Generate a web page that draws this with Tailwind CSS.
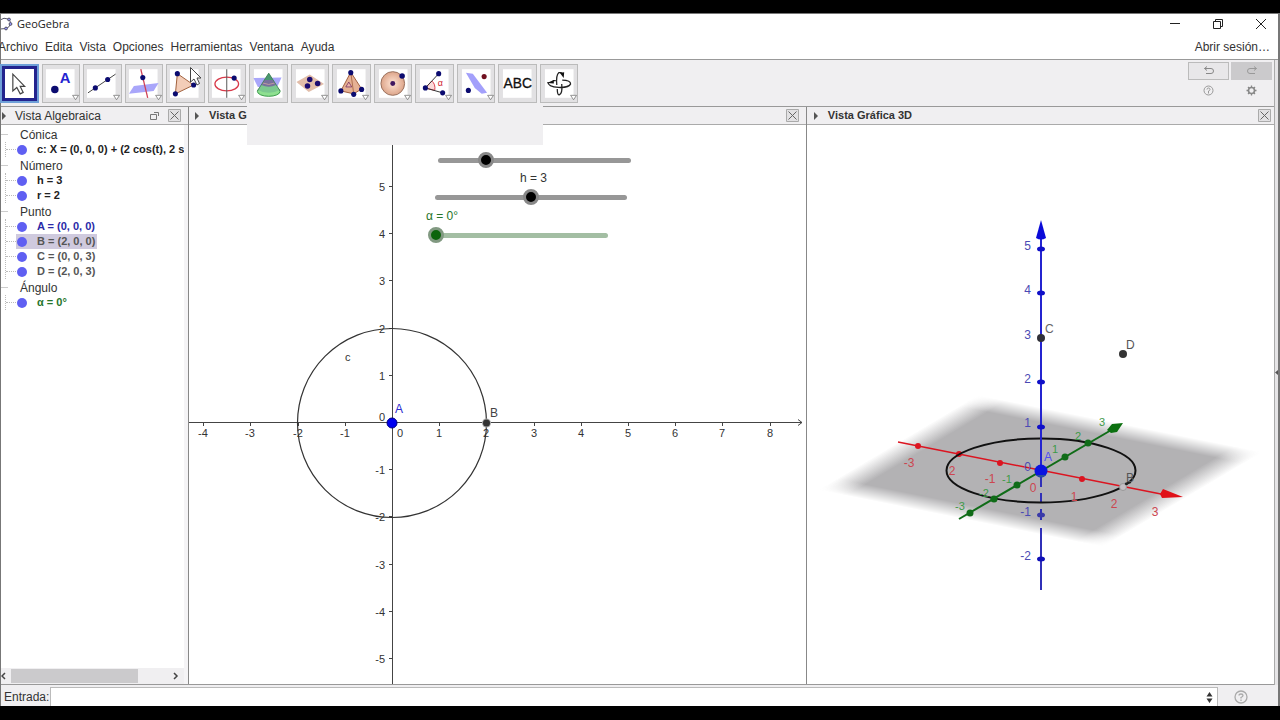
<!DOCTYPE html>
<html lang="es">
<head>
    <meta charset="UTF-8">
    <meta name="viewport" content="width=device-width, initial-scale=1.0">
    <title>GeoGebra</title>
    <script src="https://cdn.jsdelivr.net/npm/@tailwindcss/browser@4"></script>
</head>
<body class="bg-black font-['Liberation_Sans',Arial,sans-serif] text-xs text-[#333]">

<div class="flex flex-col h-screen pt-[13px] pb-[14px] overflow-hidden">
    <div class="flex flex-col flex-1 min-h-0 bg-white border-l border-t border-[#777] border-r-2">

        <!-- Title bar -->
        <header class="flex items-center h-5 shrink-0">
            <svg class="w-3 h-4 shrink-0" viewBox="0 0 12 16" fill="none" stroke="#555566" stroke-width="1">
                <path d="M-1 4Q3 1 7 3Q10 5 9.500 8Q8 12 5 12.500L-1 13"/>
                <g fill="#9a9aff"><circle cx="8" cy="3.500" r="1.400"/><circle cx="9.500" cy="8" r="1.400"/><circle cx="5" cy="12.500" r="1.400"/></g>
            </svg>
            <h1 class="flex-1 pl-1 font-['Open_Sans',sans-serif] text-[11px] text-[#222]">GeoGebra</h1>
            <div class="flex gap-[31px] pr-[11px]">
                <button aria-label="Minimizar"><svg class="w-3 h-3" viewBox="0 0 12 12" stroke="#222"><path d="M1 5.500H11"/></svg></button>
                <button aria-label="Restaurar"><svg class="w-3 h-3" viewBox="0 0 12 12" fill="none" stroke="#222"><path d="M1.500 3.500H8.500V10.500H1.500ZM3.500 3.500V1.500H10.500V8.500H8.500"/></svg></button>
                <button aria-label="Cerrar"><svg class="w-3 h-3" viewBox="0 0 12 12" stroke="#222"><path d="M1 1L11 11M11 1L1 11"/></svg></button>
            </div>
        </header>

        <!-- Menu bar -->
        <nav class="flex items-center gap-[7px] h-[25px] shrink-0 -ml-[3px] pr-2">
            <button>Archivo</button>
            <button>Edita</button>
            <button>Vista</button>
            <button>Opciones</button>
            <button>Herramientas</button>
            <button>Ventana</button>
            <button>Ayuda</button>
            <button class="ml-auto">Abrir sesión…</button>
        </nav>

        <div class="flex flex-1 min-h-0 border-t border-[#999]">
            <div class="flex flex-col flex-1 min-w-0">

                <!-- Toolbar -->
                <div class="relative flex items-center justify-between h-[46px] shrink-0 bg-[#f0eff1]">
                    <div id="tools" class="grid grid-cols-14 gap-[3px] w-[578px] -ml-px">
                        <button aria-label="Elige y mueve" class="h-[39px] bg-white border-2 border-[#6fa0d8] outline-3 -outline-offset-5 outline-[#23238e]">
                            <svg class="w-full h-full" viewBox="2 2 35 35"><path d="M13 10V27L17 23.500L20.500 30L23.500 28.500L20.500 22.500H25Z" fill="#fff" stroke="#444" stroke-width="1.200"/></svg>
                        </button>
                        <button aria-label="Punto" class="h-[39px] bg-[#e2e1e3] border border-[#bbb]">
                            <svg class="w-full h-full" viewBox="1 1 37 37"><path fill="#fff" d="M4 5H33V34H4Z"/><circle cx="13" cy="25.500" r="3.800" fill="#0b0b70"/><text x="18" y="19" font-size="15" font-weight="bold" fill="#2424d0">A</text><path d="M31 31.500H37L34 36Z" fill="#fff" stroke="#777" stroke-width=".8"/></svg>
                        </button>
                        <button aria-label="Recta" class="h-[39px] bg-[#e2e1e3] border border-[#bbb]">
                            <svg class="w-full h-full" viewBox="1 1 37 37"><path fill="#fff" d="M4 5H33V34H4Z"/><path d="M5 29L33 10" stroke="#444"/><g fill="#0b0b70"><circle cx="12.500" cy="24" r="2.600"/><circle cx="25" cy="15.500" r="2.600"/></g><path d="M31 31.500H37L34 36Z" fill="#fff" stroke="#777" stroke-width=".8"/></svg>
                        </button>
                        <button aria-label="Perpendicular" class="h-[39px] bg-[#e2e1e3] border border-[#bbb]">
                            <svg class="w-full h-full" viewBox="1 1 37 37"><path fill="#fff" d="M4 5H33V34H4Z"/><path d="M9 22L34 19L29 27L4 30Z" fill="#a9a6fa"/><path d="M16 5L23 34" stroke="#d04055" stroke-width="1.300"/><circle cx="18" cy="13.500" r="2.600" fill="#0b0b70"/><path d="M31 31.500H37L34 36Z" fill="#fff" stroke="#777" stroke-width=".8"/></svg>
                        </button>
                        <button aria-label="Polígono" class="h-[39px] bg-[#e2e1e3] border border-[#bbb]">
                            <svg class="w-full h-full" viewBox="1 1 37 37"><path fill="#fff" d="M4 5H33V34H4Z"/><path d="M11.500 9.500L28 21L9.500 30Z" fill="#f3cdb8" stroke="#a0603c"/><g fill="#0b0b70"><circle cx="11.500" cy="9.500" r="2.600"/><circle cx="28" cy="21" r="2.600"/><circle cx="9.500" cy="30" r="2.600"/></g></svg>
                        </button>
                        <button aria-label="Circunferencia" class="h-[39px] bg-[#e2e1e3] border border-[#bbb]">
                            <svg class="w-full h-full" viewBox="1 1 37 37"><path fill="#fff" d="M4 5H33V34H4Z"/><ellipse cx="19" cy="20" rx="12" ry="7" fill="none" stroke="#d83a4a" stroke-width="1.300"/><path d="M19 5V34" stroke="#555"/><circle cx="26.500" cy="14" r="2.600" fill="#0b0b70"/><path d="M31 31.500H37L34 36Z" fill="#fff" stroke="#777" stroke-width=".8"/></svg>
                        </button>
                        <button aria-label="Intersección" class="h-[39px] bg-[#e2e1e3] border border-[#bbb]">
                            <svg class="w-full h-full" viewBox="1 1 37 37"><path fill="#fff" d="M5 5H34V34H5Z"/><path d="M4.500 14L33 13.500L29 22L9 23Z" fill="#a9a6fa"/><ellipse cx="20" cy="27.500" rx="11.500" ry="5" fill="#8ee090" stroke="#3a9a4a"/><path d="M20 9L9 26Q20 32 31 26Z" fill="#7cc890"/><path d="M20 9L15.500 16H24.500Z" fill="#4a9870"/><path d="M15.500 16H24.500L27.500 21Q20 24.500 12.500 21Z" fill="#78709c"/><path d="M14 19Q20 22 26 19" fill="none" stroke="#c09aa0"/><path d="M8.500 27L20 9L31.500 27" fill="none" stroke="#3a7a50" stroke-width=".8"/></svg>
                        </button>
                        <button aria-label="Plano" class="h-[39px] bg-[#e2e1e3] border border-[#bbb]">
                            <svg class="w-full h-full" viewBox="1 1 37 37"><path fill="#fff" d="M5 5H34V34H5Z"/><path d="M5.500 18L19 10.500L33.500 20L18 28Z" fill="#e2bda9"/><g fill="#1b0b70"><circle cx="19" cy="15.500" r="2.800"/><circle cx="16.700" cy="22" r="2.800"/><circle cx="27" cy="19.500" r="2.800"/></g><path d="M31 31.500H37L34 36Z" fill="#fff" stroke="#777" stroke-width=".8"/></svg>
                        </button>
                        <button aria-label="Pirámide" class="h-[39px] bg-[#e2e1e3] border border-[#bbb]">
                            <svg class="w-full h-full" viewBox="1 1 37 37"><path fill="#fff" d="M5 5H34V34H5Z"/><path d="M19 8L30 25L22 30L9 27Z" fill="#e6b194" stroke="#a05c3c"/><path d="M19 8L22 30" fill="none" stroke="#a05c3c" stroke-width=".8"/><path d="M17 18L20 23H14Z" fill="#edb5aa" stroke="#763060" stroke-width=".8"/><g fill="#0b0b70"><circle cx="19" cy="8.500" r="2.600"/><circle cx="9" cy="27" r="2.600"/><circle cx="22" cy="30.500" r="2.600"/><circle cx="30" cy="25.500" r="2.600"/></g><path d="M31 31.500H37L34 36Z" fill="#fff" stroke="#777" stroke-width=".8"/></svg>
                        </button>
                        <button aria-label="Esfera" class="h-[39px] bg-[#e2e1e3] border border-[#bbb]">
                            <svg class="w-full h-full" viewBox="1 1 37 37"><defs><radialGradient id="ball"><stop offset=".2" stop-color="#f8d8c6"/><stop offset="1" stop-color="#dda58a"/></radialGradient></defs><path fill="#fff" d="M5 5H34V34H5Z"/><circle cx="19" cy="19.500" r="12" fill="url(#ball)" stroke="#98705c"/><circle cx="19" cy="19.500" r="2.500" fill="#401860"/><circle cx="28.500" cy="12" r="2.800" fill="#0b0b70"/><path d="M31 31.500H37L34 36Z" fill="#fff" stroke="#777" stroke-width=".8"/></svg>
                        </button>
                        <button aria-label="Ángulo" class="h-[39px] bg-[#e2e1e3] border border-[#bbb]">
                            <svg class="w-full h-full" viewBox="1 1 37 37"><path fill="#fff" d="M5 5H34V34H5Z"/><path d="M10.500 24L17 17Q21 20 20 26.500Z" fill="#fbdada" stroke="#e04050"/><path d="M24 9.500L10.500 24L28 29" fill="none" stroke="#333"/><g fill="#0b0b70"><circle cx="24" cy="9.500" r="2.600"/><circle cx="10.500" cy="24" r="2.600"/><circle cx="28" cy="29" r="2.600"/></g><text x="23" y="22" font-size="9" fill="#d02030">α</text><path d="M31 31.500H37L34 36Z" fill="#fff" stroke="#777" stroke-width=".8"/></svg>
                        </button>
                        <button aria-label="Simetría" class="h-[39px] bg-[#e2e1e3] border border-[#bbb]">
                            <svg class="w-full h-full" viewBox="1 1 37 37"><path fill="#fff" d="M5 5H34V34H5Z"/><path d="M9 8.500L16 9.500L30.500 29L25 30L18 24Z" fill="#a3a0fb"/><circle cx="27.500" cy="12.500" r="2.600" fill="#701020"/><circle cx="11.500" cy="26.500" r="2.600" fill="#0b0b70"/><path d="M31 31.500H37L34 36Z" fill="#fff" stroke="#777" stroke-width=".8"/></svg>
                        </button>
                        <button aria-label="Texto" class="h-[39px] bg-[#e2e1e3] border border-[#bbb]">
                            <svg class="w-full h-full" viewBox="1 1 37 37"><path fill="#fff" d="M5 5H34V34H5Z"/><text x="20" y="24" font-size="14" text-anchor="middle" fill="#111" stroke="#111" stroke-width=".3">ABC</text></svg>
                        </button>
                        <button aria-label="Rota vista" class="h-[39px] bg-[#e2e1e3] border border-[#bbb]">
                            <svg class="w-full h-full" viewBox="1 1 37 37"><path fill="#fff" d="M5 5H34V34H5Z"/><g fill="none" stroke="#222" stroke-width="1.300"><path d="M8 18C8 25 29 25 31 20C31 17 26 16 22.500 16M13 16.500H16"/><path d="M17.500 25C17.500 29 18 31 19.500 31C22.500 30 22.500 25 22 20M17 21C16.500 15 17 10 19 8.500H22"/></g><path d="M7 19L14 16V19.500ZM20 8.500L24.500 8L24 14Z" fill="#111"/><path d="M31 31.500H37L34 36Z" fill="#fff" stroke="#777" stroke-width=".8"/></svg>
                        </button>
                    </div>

                    <div class="grid grid-cols-2 gap-x-[2px] gap-y-px w-[84px] mr-[2px] mb-[5px]">
                        <button aria-label="Deshace" class="flex items-center justify-center h-[18px] bg-[#e8e7e9] border border-[#bbb]">
                            <svg class="w-3 h-3" viewBox="0 0 12 12" fill="none" stroke="#888"><path d="M4 1.500L1.500 3.500L4 5.500M1.500 3.500H8Q10.500 3.500 10.500 6T8 8.500H3"/></svg>
                        </button>
                        <button aria-label="Rehace" class="flex items-center justify-center h-[18px] bg-[#cbcacc]">
                            <svg class="w-3 h-3" viewBox="0 0 12 12" fill="none" stroke="#999"><path d="M8 1.500L10.500 3.500L8 5.500M10.500 3.500H4Q1.500 3.500 1.500 6T4 8.500H9"/></svg>
                        </button>
                        <button aria-label="Ayuda" class="flex items-center justify-center h-[18px]">
                            <svg class="w-[11px] h-[11px]" viewBox="0 0 11 11" fill="none" stroke="#999"><circle cx="5.500" cy="5.500" r="4.500"/><path d="M4 4.500Q4 3 5.500 3T7 4.500Q7 5.500 5.500 6V8.500"/></svg>
                        </button>
                        <button aria-label="Preferencias" class="flex items-center justify-center h-[18px]">
                            <svg class="w-[11px] h-[11px]" viewBox="0 0 11 11" fill="none" stroke="#888"><circle cx="5.500" cy="5.500" r="3" stroke-width="1.600"/><path d="M5.500 .5V2.500M5.500 8.500V10.500M.5 5.500H2.500M8.500 5.500H10.500M2 2L3.500 3.500M7.500 7.500L9 9M9 2L7.500 3.500M3.500 7.500L2 9" stroke-width="1.300"/></svg>
                        </button>
                    </div>

                    <!-- Empty tooltip under the toolbar -->
                    <div class="absolute z-20 left-[246px] top-[44px] w-[296px] h-[41px] bg-[#f0eff1]"></div>
                    <!-- Mouse pointer -->
                    <svg class="absolute z-20 left-[188px] top-[6px] w-4 h-6" viewBox="0 0 16 24"><path d="M1.500 1.500V16L5 13L8 19L10.500 17.500L8 12H12Z" fill="#fff" stroke="#444"/></svg>
                </div>

                <!-- Views -->
                <main class="flex flex-1 min-h-0 border-y border-[#999]">

                    <!-- Algebra view -->
                    <section class="flex flex-col w-[188px] shrink-0 border-r border-[#888] bg-[#f5f4f6]">
                        <div class="flex items-center h-[18px] shrink-0 pr-[7px] bg-[#f0eff1] border-b border-[#aaa]">
                            <svg class="w-[14px] h-2" viewBox="0 0 14 8"><path d="M1 0L5 4L1 8Z" fill="#555"/></svg>
                            <h2 class="flex-1">Vista Algebraica</h2>
                            <button aria-label="Desacopla" class="mr-2"><svg class="w-[10px] h-[10px]" viewBox="0 0 10 10" fill="none" stroke="#777"><path d="M.5 3.500H6.500V8.500H.5ZM4 1.500H8.500V5"/></svg></button>
                            <button aria-label="Cierra Vista Algebraica"><svg class="w-[13px] h-[13px]" viewBox="0 0 13 13" fill="none" stroke="#666"><path d="M.5 .5H12.500V12.500H.5Z" fill="#e2e1e3" stroke="#aaa"/><path d="M2.500 2.500L10.500 10.500M10.500 2.500L2.500 10.500"/></svg></button>
                        </div>
                        <ul id="algebra" class="flex flex-col gap-px flex-1 min-h-0 mr-1 pt-[2px] bg-white overflow-hidden whitespace-nowrap"></ul>
                        <div class="flex items-center h-4 shrink-0 mr-1 bg-[#f0eff1]">
                            <button aria-label="Izquierda" class="w-[10px]"><svg class="w-[6px] h-2" viewBox="0 0 6 8" fill="none" stroke="#444" stroke-width="1.500"><path d="M4 1L1 4L4 7"/></svg></button>
                            <div class="w-[127px] h-[14px] bg-[#cbcacc]"></div>
                            <button aria-label="Derecha" class="ml-auto mr-1"><svg class="w-2 h-2" viewBox="0 0 8 8" fill="none" stroke="#444" stroke-width="1.500"><path d="M2 1L5 4L2 7"/></svg></button>
                        </div>
                    </section>

                    <!-- Graphics view -->
                    <section class="flex flex-col flex-[618] min-w-0 border-r border-[#888]">
                        <div class="flex items-center h-[18px] shrink-0 pl-[5px] pr-[7px] bg-[#f0eff1] border-b border-[#aaa]">
                            <svg class="w-[15px] h-2" viewBox="0 0 15 8"><path d="M1 0L5 4L1 8Z" fill="#555"/></svg>
                            <h2 class="flex-1 font-bold text-[11px]">Vista Gráfica</h2>
                            <button aria-label="Cierra Vista Gráfica"><svg class="w-[13px] h-[13px]" viewBox="0 0 13 13" fill="none" stroke="#666"><path d="M.5 .5H12.500V12.500H.5Z" fill="#e2e1e3" stroke="#aaa"/><path d="M2.500 2.500L10.500 10.500M10.500 2.500L2.500 10.500"/></svg></button>
                        </div>
                        <div class="relative flex-1 min-h-0 overflow-hidden">
                            <svg class="absolute inset-0 w-full h-full text-[11px]">
                                <g transform="translate(203 298)">
                                    <g id="axes" stroke="#444" fill="none"><path d="M-203 -.5H410M406 -3.500L410 -.5L406 2.500M.5 -300V262"/></g>
                                    <g id="numbers" fill="#333"></g>
                                    <circle r="94.500" fill="none" stroke="#333" stroke-width="1.200"/>
                                    <text x="-47" y="-62" fill="#333">c</text>
                                    <circle r="5" fill="#0000f0" stroke="#000080"/>
                                    <text x="3" y="-10" fill="#2a2ad0" class="text-xs">A</text>
                                    <circle cx="94.500" r="4.500" fill="#aaa"/>
                                    <circle cx="94.500" r="3.500" fill="#333"/>
                                    <text x="98" y="-6" fill="#444" class="text-xs">B</text>
                                </g>
                            </svg>

                            <div class="absolute left-[241px] top-[27px] w-[209px] h-4">
                                <div class="absolute inset-x-2 top-[6px] h-[5px] rounded-full bg-[#979797]"></div>
                                <input type="range" min="1" max="5" value="2" aria-label="r" class="absolute inset-0 w-full h-4 appearance-none bg-transparent [&::-webkit-slider-thumb]:appearance-none [&::-webkit-slider-thumb]:size-4 [&::-webkit-slider-thumb]:rounded-full [&::-webkit-slider-thumb]:bg-black [&::-webkit-slider-thumb]:border-3 [&::-webkit-slider-thumb]:border-[#888]">
                            </div>

                            <label for="slider-h" class="absolute left-[331px] top-[45px]">h = 3</label>
                            <div class="absolute left-[238px] top-[64px] w-[208px] h-4">
                                <div class="absolute inset-x-2 top-[6px] h-[5px] rounded-full bg-[#979797]"></div>
                                <input id="slider-h" type="range" min="1" max="5" value="3" class="absolute inset-0 w-full h-4 appearance-none bg-transparent [&::-webkit-slider-thumb]:appearance-none [&::-webkit-slider-thumb]:size-4 [&::-webkit-slider-thumb]:rounded-full [&::-webkit-slider-thumb]:bg-black [&::-webkit-slider-thumb]:border-3 [&::-webkit-slider-thumb]:border-[#888]">
                            </div>

                            <label for="slider-a" class="absolute left-[237px] top-[83px] text-[#26752b]">α = 0°</label>
                            <div class="absolute left-[239px] top-[102px] w-[188px] h-4">
                                <div class="absolute inset-x-2 top-[6px] h-[5px] rounded-full bg-[#a3bea3]"></div>
                                <input id="slider-a" type="range" min="0" max="360" value="0" class="absolute inset-0 w-full h-4 appearance-none bg-transparent [&::-webkit-slider-thumb]:appearance-none [&::-webkit-slider-thumb]:size-4 [&::-webkit-slider-thumb]:rounded-full [&::-webkit-slider-thumb]:bg-[#0c640c] [&::-webkit-slider-thumb]:border-3 [&::-webkit-slider-thumb]:border-[#819981]">
                            </div>
                        </div>
                    </section>

                    <!-- 3D graphics view -->
                    <section class="flex flex-col flex-[468] min-w-0">
                        <div class="flex items-center h-[18px] shrink-0 pl-[6px] pr-[3px] bg-[#f0eff1] border-b border-[#aaa]">
                            <svg class="w-[15px] h-2" viewBox="0 0 15 8"><path d="M1 0L5 4L1 8Z" fill="#555"/></svg>
                            <h2 class="flex-1 font-bold text-[11px]">Vista Gráfica 3D</h2>
                            <button aria-label="Cierra Vista Gráfica 3D"><svg class="w-[13px] h-[13px]" viewBox="0 0 13 13" fill="none" stroke="#666"><path d="M.5 .5H12.500V12.500H.5Z" fill="#e2e1e3" stroke="#aaa"/><path d="M2.500 2.500L10.500 10.500M10.500 2.500L2.500 10.500"/></svg></button>
                        </div>
                        <svg class="flex-1 min-h-0 w-full text-xs">
                            <defs>
                                <linearGradient id="fade-x"><stop offset="0" stop-color="#b3b2b4" stop-opacity="0"/><stop offset=".1" stop-color="#b3b2b4"/><stop offset=".9" stop-color="#b3b2b4"/><stop offset="1" stop-color="#b3b2b4" stop-opacity="0"/></linearGradient>
                                <linearGradient id="fade-y" x2="0" y2="1"><stop offset="0" stop-color="#fff" stop-opacity="0"/><stop offset=".12" stop-color="#fff"/><stop offset=".88" stop-color="#fff"/><stop offset="1" stop-color="#fff" stop-opacity="0"/></linearGradient>
                                <mask id="edges" maskUnits="userSpaceOnUse" x="0" y="0" width="100" height="100"><rect width="100" height="100" fill="url(#fade-y)"/></mask>
                            </defs>

                            <!-- Plane z = 0 -->
                            <g transform="matrix(2.850 .570 1.600 -.950 11 365)">
                                <rect width="100" height="100" fill="url(#fade-x)" mask="url(#edges)"/>
                            </g>

                            <g transform="translate(234 346)">
                                <!-- z axis, below the plane -->
                                <path d="M0 0V16M0 22V32M0 38V49M0 57V119" stroke="#3030b8" stroke-width="2"/>
                                <ellipse cy="44" rx="4" ry="2.500" fill="#3a3aa8"/><ellipse cy="88" rx="4" ry="2.500" fill="#1010b8"/>

                                <!-- x axis -->
                                <path d="M-143 -29L125 24" stroke="#dc1420" stroke-width="1.500"/>
                                <path d="M142 26L122 18L119 23L121 27Z" fill="#e01018"/>
                                <g fill="#dc1420"><circle cx="-123" cy="-25" r="3"/><circle cx="-82" cy="-17" r="3"/><circle cx="-41" cy="-8" r="3"/><circle cx="41" cy="8" r="3"/></g>

                                <!-- circle c -->
                                <ellipse cx="0" cy="-.5" rx="94.500" ry="32" fill="none" stroke="#111" stroke-width="2"/>

                                <!-- y axis -->
                                <path d="M-82 48L72 -42" stroke="#106c18" stroke-width="2"/>
                                <path d="M82 -48L71 -47L66 -41L70 -38L76 -39Z" fill="#0c7010"/>
                                <g fill="#106c18"><circle cx="-71" cy="42" r="3.500"/><circle cx="-47" cy="28" r="3.500"/><circle cx="-24" cy="14" r="3.500"/><circle cx="24" cy="-14" r="3.500"/><circle cx="47" cy="-28" r="3.500"/></g>

                                <!-- z axis -->
                                <path d="M0 0V-235" stroke="#2424d0" stroke-width="2"/>
                                <path d="M0 -251L-5 -233Q0 -230 5 -233Z" fill="#0a0ad8"/>
                                <g fill="#1010c8"><ellipse cy="-44" rx="4" ry="2.500"/><ellipse cy="-89" rx="4" ry="2.500"/><ellipse cy="-178" rx="4" ry="2.500"/><ellipse cy="-222" rx="4" ry="2.500"/></g>

                                <g fill="#4a4ab4" text-anchor="end">
                                    <text x="-10" y="-221">5</text><text x="-10" y="-177">4</text><text x="-10" y="-132">3</text><text x="-10" y="-88">2</text><text x="-10" y="-44">1</text><text x="-10" y="0">0</text><text x="-10" y="45">-1</text><text x="-10" y="89">-2</text>
                                </g>
                                <g fill="#cc4650" text-anchor="middle">
                                    <text x="-132" y="-4">-3</text><text x="-89" y="4">2</text><text x="-51" y="12">-1</text><text x="-8" y="21">0</text><text x="33" y="30">1</text><text x="73" y="37">2</text><text x="114" y="45">3</text>
                                </g>
                                <g fill="#3d9a48" text-anchor="middle" class="text-[11px]">
                                    <text x="-81" y="39">-3</text><text x="-57" y="26">-2</text><text x="-34" y="12">-1</text><text x="14" y="-18">1</text><text x="37" y="-31">2</text><text x="61" y="-45">3</text>
                                </g>

                                <circle r="6.500" fill="#0a14e0"/><path d="M-5 4Q0 9 5 4Z" fill="#28509a"/>
                                <text x="3" y="-10" fill="#5050f0">A</text>
                                <circle cy="-133" r="4" fill="#303038"/><text x="4" y="-138" fill="#666">C</text>
                                <circle cx="82" cy="-117" r="4" fill="#333"/><text x="85" y="-122" fill="#555">D</text>
                                <circle cx="82" cy="16" r="3.500" fill="#c4bfc4" stroke="#999"/><path d="M84 13L90 11" stroke="#222" stroke-width="2"/><text x="85" y="11" fill="#555">B</text>
                            </g>
                        </svg>
                    </section>
                </main>
            </div>

            <!-- Collapsed side bar -->
            <div class="flex items-center w-1 shrink-0 bg-[#e6e5e7] border-l border-[#aaa]">
                <svg class="w-[3px] h-[5px]" viewBox="0 0 3 5"><path d="M3 0L0 2.500L3 5Z" fill="#555"/></svg>
            </div>
        </div>

        <!-- Input bar -->
        <footer class="flex items-end h-[21px] shrink-0 pt-[2px] bg-[#f0eff1]">
            <label for="entry" class="self-center w-[49px] pl-[3px]">Entrada:</label>
            <div class="flex items-center flex-1 h-full bg-white border border-b-0 border-[#bbb]">
                <input id="entry" type="text" class="flex-1 min-w-0 px-1 outline-none">
                <button aria-label="Historial" class="mr-1"><svg class="w-[7px] h-[11px]" viewBox="0 0 7 11" fill="#333"><path d="M3.500 0L6.500 4.500H.5ZM3.500 11L.5 6.500H6.500Z"/></svg></button>
            </div>
            <button aria-label="Ayuda de entrada" class="self-center ml-4 mr-[30px]"><svg class="w-[14px] h-[14px]" viewBox="0 0 14 14" fill="none" stroke="#aaa" stroke-width="1.300"><circle cx="7" cy="7" r="6"/><path d="M5 5.500Q5 4 7 4T9 5.500Q9 6.500 7 7.500V8.500M7 9.500V11"/></svg></button>
        </footer>
    </div>
</div>

<script>
    // Objects of the construction, grouped by type
    const groups = [
        { name: 'Cónica', items: [{ text: 'c: X = (0, 0, 0) + (2 cos(t), 2 s', style: 'text-[#222]' }] },
        { name: 'Número', items: [{ text: 'h = 3', style: 'text-[#222]' }, { text: 'r = 2', style: 'text-[#222]' }] },
        { name: 'Punto', items: [
            { text: 'A = (0, 0, 0)', style: 'text-[#2a2aa8]' },
            { text: 'B = (2, 0, 0)', style: 'text-[#555] bg-[#cfcade]' },
            { text: 'C = (0, 0, 3)', style: 'text-[#555]' },
            { text: 'D = (2, 0, 3)', style: 'text-[#555]' }
        ] },
        { name: 'Ángulo', items: [{ text: 'α = 0°', style: 'text-[#26752b]' }] }
    ];

    document.getElementById('algebra').innerHTML = groups.map(group => `
        <li>
            <div class="flex items-center h-[15px]"><span class="w-[7px] mr-3 border-t border-[#ccc]"></span>${group.name}</div>
            <ul class="ml-1 border-l border-dotted border-[#bbb]">
                ${group.items.map(item => `
                    <li class="flex items-center h-[15px] text-[11px] font-bold">
                        <span class="w-[10px] shrink-0 border-t border-dotted border-[#bbb]"></span>
                        <span class="flex items-center h-[15px] pl-px pr-[2px] ${item.style}">
                            <span class="size-[10px] shrink-0 rounded-full bg-[#5f5ff2] mr-[10px]"></span>${item.text}
                        </span>
                    </li>`).join('')}
            </ul>
        </li>`).join('');

    // Ticks and numbers of both axes, in pixels from the origin
    const unit = 47.2;
    let ticks = '';
    let numbers = '<text x="5" y="14">0</text><text x="-7" y="-2" text-anchor="end">0</text>';
    for (let n = -5; n <= 8; n++) {
        if (n === 0) continue;
        const pos = Math.round(n * unit);
        if (n >= -4) {
            ticks += `<path d="M${pos + 0.5} 0V3"/>`;
            numbers += `<text x="${pos}" y="14" text-anchor="middle">${n}</text>`;
        }
        if (n <= 5) {
            ticks += `<path d="M-3 ${-pos - 0.5}H0"/>`;
            numbers += `<text x="-7" y="${-pos + 4}" text-anchor="end">${n}</text>`;
        }
    }
    document.getElementById('axes').innerHTML += ticks;
    document.getElementById('numbers').innerHTML = numbers;
</script>
</body>
</html>
